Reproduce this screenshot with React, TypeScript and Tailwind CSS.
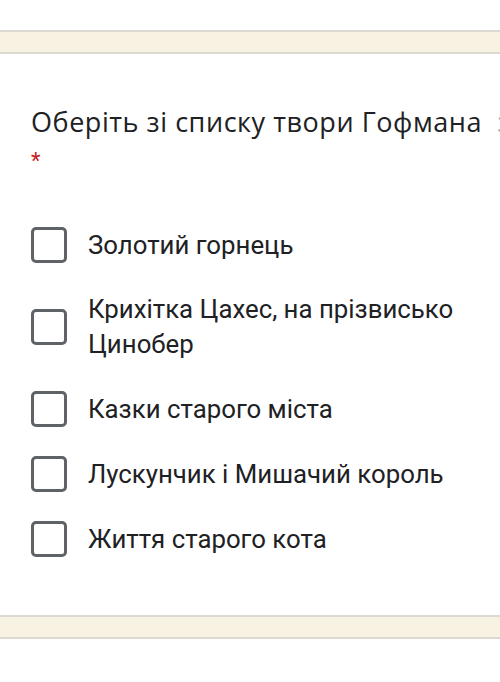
import React from 'react';

const options = [
  'Золотий горнець',
  'Крихітка Цахес, на прізвисько Цинобер',
  'Казки старого міста',
  'Лускунчик і Мишачий король',
  'Життя старого кота',
];

const Band: React.FC = () => (
  <div className="h-[24px] border-y-2 border-[#dcd8d2] bg-[#f8f2e2]" />
);

export default function App() {
  return (
    <div className="min-h-[682px] w-[500px] overflow-hidden bg-white">
      <div className="h-[30px]" />
      <Band />
      <div className="pl-[31px] pt-[52px] pb-[58px]">
        <div
          className="whitespace-nowrap text-[27px] leading-8 tracking-[0.55px] text-[#202124]"
          style={{ fontFamily: '"Open Sans", sans-serif' }}
        >
          Оберіть зі списку твори Гофмана <span className="ml-2 text-[#9aa0a6]">з</span>
        </div>
        <div className="h-[32px] pt-[7px] text-[22px] leading-8 text-[#c5221f]" style={{ fontFamily: 'Roboto, sans-serif' }}>
          *
        </div>
        <div
          className="mt-[57px] flex flex-col gap-[29px]"
          style={{ fontFamily: 'Roboto, sans-serif' }}
        >
          {options.map((o) => (
            <label key={o} className="flex items-center">
              <span className="h-[36px] w-[36px] shrink-0 rounded-[5px] border-[3px] border-[#5f6368]" />
              <span className="ml-[21px] pr-4 text-[25.8px] leading-[35px] text-[#202124]">{o}</span>
            </label>
          ))}
        </div>
      </div>
      <Band />
    </div>
  );
}
